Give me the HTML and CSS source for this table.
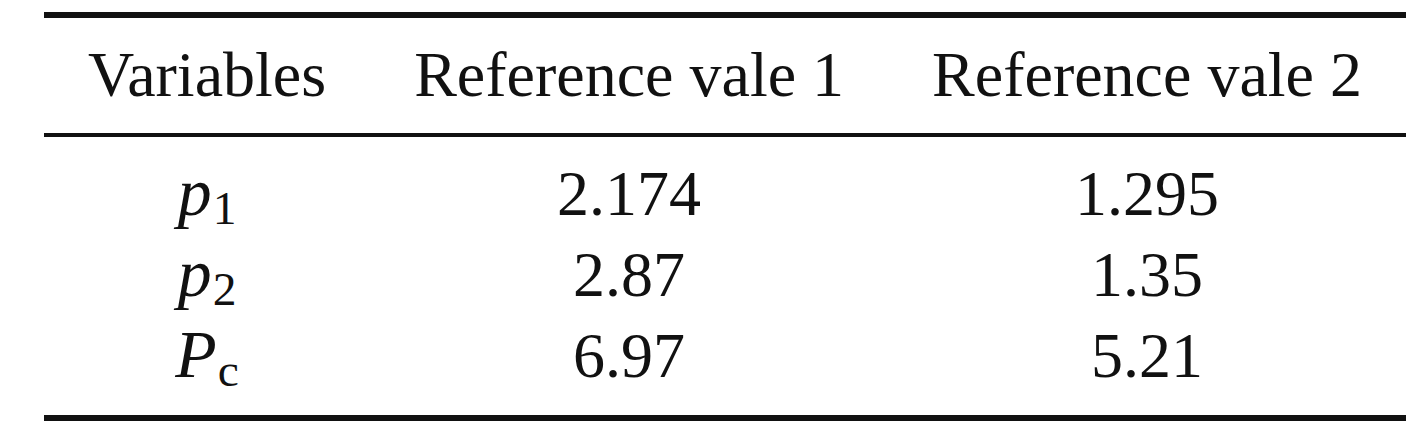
FILE: index.html
```html
<!DOCTYPE html>
<html lang="en">
<head>
    <meta charset="UTF-8">
    <title>Reference values</title>
    <link rel="stylesheet" href="styles.css">
</head>
<body>
    <table class="vals">
        <thead>
            <tr>
                <th>Variables</th>
                <th>Reference vale 1</th>
                <th>Reference vale 2</th>
            </tr>
        </thead>
        <tbody>
            <tr>
                <td><span class="m"><i>p</i><sub>1</sub></span></td>
                <td>2.174</td>
                <td>1.295</td>
            </tr>
            <tr>
                <td><span class="m"><i>p</i><sub>2</sub></span></td>
                <td>2.87</td>
                <td>1.35</td>
            </tr>
            <tr>
                <td><span class="m"><i>P</i><sub>c</sub></span></td>
                <td>6.97</td>
                <td>5.21</td>
            </tr>
        </tbody>
    </table>
</body>
</html>
```

FILE: styles.css
```css
*{
    margin:0;
    padding:0;
}

body{
    background:#fff;
    color:#111;
    font-family:"Liberation Serif","Times New Roman",serif;
}

.vals{
    border-collapse:collapse;
    margin:12px 0 0 44px;
    font-size:64px;
}

.vals th,
.vals td{
    padding:0 44px;
    text-align:center;
    white-space:nowrap;
    font-weight:normal;
}

/* toprule / midrule */
.vals thead tr{
    border-top:6px solid #111;
    border-bottom:4px solid #111;
}
.vals th{
    line-height:64px;
    padding-top:25px;
    padding-bottom:26px;
}

.vals td{
    line-height:81px;
}
.vals tbody tr:first-child td{
    padding-top:16px;
}
.vals tbody tr:last-child td{
    padding-bottom:19px;
}
/* bottomrule */
.vals tbody tr:last-child{
    border-bottom:6px solid #111;
}

.m{
    font-size:1.06em;
    line-height:0;
}
.m i{
    font-style:italic;
}
.m sub{
    font-size:0.7em;
    line-height:0;
    vertical-align:-9px;
    margin-left:1px;
}
```
